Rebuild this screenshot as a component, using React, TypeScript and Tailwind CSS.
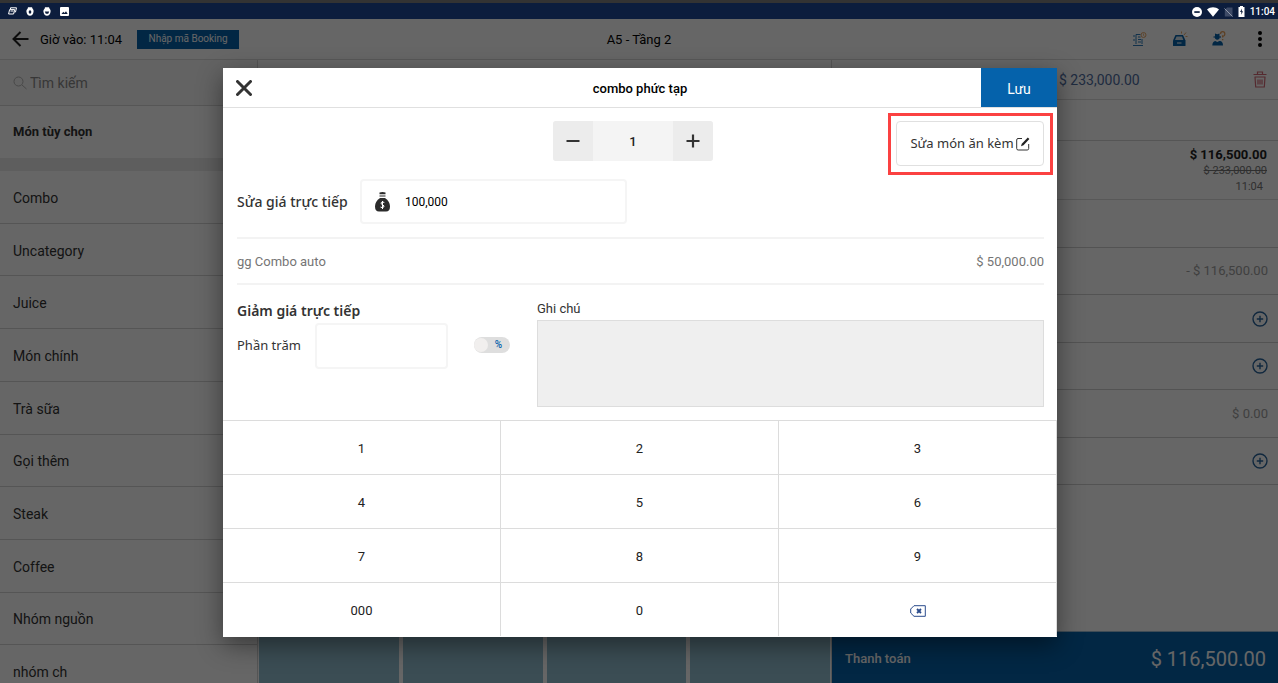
import { useState } from 'react';

const categories = [
  'Combo',
  'Uncategory',
  'Juice',
  'Món chính',
  'Trà sữa',
  'Gọi thêm',
  'Steak',
  'Coffee',
  'Nhóm nguồn',
  'nhóm ch',
];

const keys = ['1', '2', '3', '4', '5', '6', '7', '8', '9', '000', '0', 'del'];

type BillRow = { id: number; value?: string; add?: boolean };

const billRows: BillRow[] = [
  { id: 1, value: '- $ 116,500.00' },
  { id: 2, add: true },
  { id: 3, add: true },
  { id: 4, value: '$ 0.00' },
  { id: 5, add: true },
];

function StatusBar() {
  return (
    <div className="relative z-20 flex h-[19px] shrink-0 items-center justify-between border-t-[3px] border-[#333] bg-[#0c1d3d] pr-[3px] pl-2 text-white">
      <div className="flex items-center gap-[9px]">
        <svg width="9" height="8" viewBox="0 0 9 8" fill="none" stroke="currentColor">
          <path d="M2.5 2V.8h6L7.5 5H6.4M1.6 2.6h5L5.6 7H.6zM2.5 4h2.8" strokeWidth="1" />
        </svg>
        <svg width="8" height="9" viewBox="0 0 8 9">
          <path d="M2 .3h4l.6 1.5C7.5 2.6 7.8 3.7 7.5 5 7.2 7.4 6 8.7 4 8.7S.8 7.4.5 5C.2 3.7.6 2.6 1.6 1.8z" fill="currentColor" />
          <ellipse cx="4" cy="5" rx="1.3" ry="1.7" fill="#0c1d3d" />
        </svg>
        <svg width="8" height="9" viewBox="0 0 8 9">
          <path d="M2 .3h4l.6 1.5C7.5 2.6 7.8 3.7 7.5 5 7.2 7.4 6 8.7 4 8.7S.8 7.4.5 5C.2 3.7.6 2.6 1.6 1.8z" fill="currentColor" />
          <path d="M1.8 4.5h4.4L5.2 6.7H2.8z" fill="#0c1d3d" />
        </svg>
        <svg width="9" height="9" viewBox="0 0 9 9">
          <rect width="9" height="9" rx="1" fill="currentColor" />
          <path d="m1.5 7 1.8-2.3 1.2 1.4L6 4.2 7.7 7z" fill="#0c1d3d" />
        </svg>
      </div>
      <div className="flex items-center gap-[5px] pt-px">
        <svg width="10" height="10" viewBox="0 0 10 10">
          <circle cx="5" cy="5" r="5" fill="currentColor" />
          <path d="M2.3 4.2h5.4v1.7H2.3z" fill="#0c1d3d" />
        </svg>
        <svg width="12" height="10" viewBox="0 0 12 10">
          <path d="M0 2.5C3.5-.4 8.5-.4 12 2.5L6 9.7z" fill="currentColor" />
        </svg>
        <svg width="9" height="10" viewBox="0 0 9 10">
          <path d="M3 .5h5.5v9H.8V3z" fill="#3d4a66" />
          <path d="m.5 1.5 8 8" stroke="#8f98aa" />
        </svg>
        <svg width="7" height="11" viewBox="0 0 7 11">
          <path d="M2 0h3v1h1.5v10h-6V1H2z" fill="currentColor" />
          <path d="M4 2.5 2 6h1.3v2.7L5 5.2H3.8z" fill="#0c1d3d" />
        </svg>
        <span className="text-[10px] leading-4 font-medium">11:04</span>
      </div>
    </div>
  );
}

function TopBar() {
  return (
    <header className="grid h-[41px] shrink-0 grid-cols-[1fr_auto_1fr] items-center border-b border-[#dcdcdc] bg-white px-3">
      <div className="flex items-center">
        <button aria-label="Quay lại" className="mr-[11px]">
          <svg width="17" height="16" viewBox="0 0 17 16" fill="none" stroke="#222" strokeWidth="2">
            <path d="M8.5 1 1.5 8l7 7M2 8h14.5" />
          </svg>
        </button>
        <span className="pt-px text-[13px] text-black">Giờ vào: 11:04</span>
        <button className="ml-[15px] h-[19px] w-[102px] bg-[#0562ab] text-[10px] leading-4 text-white">Nhập mã Booking</button>
      </div>
      <h1 className="pt-px text-[13px] text-black">A5 - Tầng 2</h1>
      <div className="flex items-center justify-end pr-1">
        <button aria-label="Ghi chú đơn" className="mr-6">
          <svg width="16" height="16" viewBox="0 0 16 16" fill="none">
            <path d="M4 13V3.5h4.5M10 8v5M1 14.5h10M6 6h2.5M6 8.5h3M6 11h3M2 4v2M2 8v2" stroke="#2d7cbc" strokeWidth="1" />
            <circle cx="11.5" cy="4" r="2.5" stroke="#e8a96a" strokeWidth="1" />
            <path d="m11.5 2.5v2l1 .8" stroke="#e8a96a" strokeWidth=".8" />
          </svg>
        </button>
        <button aria-label="Máy in" className="mr-6">
          <svg width="16" height="16" viewBox="0 0 16 16">
            <path d="M3.5 4h7.5l2.5 5.5v5q0 .5-.5.5H1.5q-.5 0-.5-.5v-5z" fill="#0562ab" />
            <path d="M4.5 5.5h5.5L11.3 9H3z" fill="#d5e3ee" />
            <path d="M5 12h4.5" stroke="#fff" />
            <path d="M9.5 2.5V.5M12 4l2-2.5M13.5 5.5h2" stroke="#e8a96a" />
          </svg>
        </button>
        <button aria-label="Khách hàng" className="mr-8">
          <svg width="14" height="16" viewBox="0 0 14 16">
            <path d="M3 2.5 5.2 3.3 7.5 2.5V7.5q-2.2 2.5-4.5 0zM.3 14.5q0-4 3-4.5l2 1 2-1h1q2.7.5 2.7 4.5z" fill="#0562ab" />
            <path d="M1.5 6h7.5" stroke="#0562ab" strokeWidth="1.2" />
            <path d="M8.5 3q0-2.3 2.2-2.3T12.8 3t-2.1 2v1.5M10.7 8v1.3" fill="none" stroke="#e8a05a" strokeWidth="1.3" />
          </svg>
        </button>
        <button aria-label="Thêm tùy chọn">
          <svg width="4" height="18" viewBox="0 0 4 18" fill="#000">
            <circle cx="2" cy="3" r="2" />
            <circle cx="2" cy="9" r="2" />
            <circle cx="2" cy="15" r="2" />
          </svg>
        </button>
      </div>
    </header>
  );
}

function CategoryList() {
  return (
    <aside className="flex w-[258px] shrink-0 flex-col border-r border-[#d5d5d5] text-sm text-[#333]">
      <label className="flex h-[46px] shrink-0 items-center gap-[3px] border-b border-[#d8d8d8] bg-[#f7f7f7] pl-[13px]">
        <svg width="14" height="14" viewBox="0 0 14 14" fill="none" stroke="#b5b5b5">
          <circle cx="5.5" cy="5.5" r="4.5" />
          <path d="m9 9 4.5 4" />
        </svg>
        <input aria-label="Tìm kiếm" placeholder="Tìm kiếm" className="w-40 bg-transparent outline-none placeholder:text-[#8a8a8a]" />
      </label>
      <a href="#mon-tuy-chon" className="flex h-[52px] shrink-0 items-center pt-px pl-[13px] text-[13px] font-bold">
        Món tùy chọn
      </a>
      <div className="h-[13px] shrink-0 bg-[#ebebeb]" />
      <nav className="grid h-[527px] shrink-0 auto-rows-fr">
        {categories.map((name) => (
          <a key={name} href="#category" className="flex items-center border-b border-[#d5d5d5] pt-0.5 pl-[13px]">
            {name}
          </a>
        ))}
      </nav>
    </aside>
  );
}

function ProductGrid() {
  return (
    <main className="flex min-w-0 flex-1 flex-col justify-end">
      <div className="grid h-[140px] grid-cols-4 gap-1 px-px">
        {[0, 1, 2, 3].map((i) => (
          <div key={i} className="bg-[#94c0d2]" />
        ))}
      </div>
    </main>
  );
}

function PlusIcon() {
  return (
    <svg width="16" height="16" viewBox="0 0 16 16" fill="none" stroke="#2a659c">
      <circle cx="8" cy="8" r="7" strokeWidth="1.4" />
      <path d="M8 4.8v6.4M4.8 8h6.4" strokeWidth="1.4" />
    </svg>
  );
}

function Bill() {
  return (
    <section className="flex w-[447px] shrink-0 flex-col border-l border-[#d5d5d5]">
      <div className="flex h-10 shrink-0 items-center justify-between border-b border-[#dcdcdc] pr-[11px] pl-[227px]">
        <span className="pt-px text-sm text-[#4e6d9f]">$ 233,000.00</span>
        <button aria-label="Xóa đơn">
          <svg width="14" height="17" viewBox="0 0 14 17" fill="none" stroke="#d46a76">
            <path d="M.5 3.5h13M4.5 3V1h5v2M1.5 6h11M2 6l.7 10h8.6L12 6M5 8.5v5M7 8.5v5M9 8.5v5" strokeWidth="1.2" />
          </svg>
        </button>
      </div>
      <div className="h-[41px] shrink-0 border-b border-[#d5d5d5]" />
      <div className="flex h-[59px] shrink-0 flex-col items-end justify-center border-b border-[#dcdcdc] pt-0.5 pr-[11px] text-[11px] leading-4 text-[#777]">
        <strong className="text-[13px] leading-4 font-bold text-[#222]">$ 116,500.00</strong>
        <s>$ 233,000.00</s>
        <span className="pr-1">11:04</span>
      </div>
      <div className="h-12 shrink-0 border-b border-[#d0d0d0]" />
      <div className="grid h-[237px] shrink-0 auto-rows-fr">
        {billRows.map((row) => (
          <div key={row.id} className="flex items-center justify-end border-b border-[#d0d0d0] pr-2.5 text-[13px] text-[#a0a0a0]">
            {row.value}
            {row.add && (
              <button aria-label="Thêm">
                <PlusIcon />
              </button>
            )}
          </div>
        ))}
      </div>
      <button className="mt-auto flex h-[52px] shrink-0 items-center justify-between border-t border-[#9dbdd8] bg-[#0562ab] pt-0.5 pr-3 pl-[13px] text-white">
        <span className="text-[13px] font-medium">Thanh toán</span>
        <span className="text-xl">$ 116,500.00</span>
      </button>
    </section>
  );
}

function ComboDialog() {
  const [qty, setQty] = useState(1);
  const [price, setPrice] = useState('100,000');
  const [percent, setPercent] = useState('');

  function press(key: string) {
    setPercent((p) => (key === 'del' ? p.slice(0, -1) : p + key));
  }

  return (
    <div role="dialog" aria-label="combo phức tạp" className="w-[834px] bg-white text-[#333] shadow-[0_8px_24px_rgba(0,0,0,0.45)]">
      <div className="grid h-10 grid-cols-[76px_1fr_76px] items-stretch border-b border-[#e0e0e0]">
        <button aria-label="Đóng" className="flex items-center pl-[13px]">
          <svg width="16" height="16" viewBox="0 0 16 16" stroke="#333" strokeWidth="3" strokeLinecap="round">
            <path d="m1.5 1.5 13 13M14.5 1.5l-13 13" />
          </svg>
        </button>
        <h2 className="self-center pt-0.5 text-center text-[13px] font-medium text-black">combo phức tạp</h2>
        <button className="bg-[#0562ab] pt-0.5 text-sm text-white">Lưu</button>
      </div>

      <div className="h-[312px] pt-[13px] pr-[13px] pl-3.5">
        <div className="grid h-[45px] grid-cols-[316px_160px_1fr] items-start">
          <div />
          <div className="grid h-10 grid-cols-[40px_1fr_40px] overflow-hidden rounded-[3px] bg-[#f4f4f4] text-[#222]">
            <button aria-label="Giảm" className="flex items-center justify-center bg-[#ececec]" onClick={() => setQty(Math.max(1, qty - 1))}>
              <svg width="14" height="14" viewBox="0 0 14 14" stroke="#333" strokeWidth="2.2">
                <path d="M.5 7h13" />
              </svg>
            </button>
            <span className="self-center pt-px text-center text-[13px] font-medium">{qty}</span>
            <button aria-label="Tăng" className="flex items-center justify-center bg-[#ececec]" onClick={() => setQty(qty + 1)}>
              <svg width="14" height="14" viewBox="0 0 14 14" stroke="#333" strokeWidth="2.2">
                <path d="M.5 7h13M7 .5v13" />
              </svg>
            </button>
          </div>
          <div className="relative justify-self-end">
            <button className="flex h-[45px] w-[148px] items-center justify-center gap-0.5 rounded-[4px] border border-[#e0e0e0] font-['Noto_Sans',sans-serif] text-[13px]">
              Sửa món ăn kèm
              <svg width="14" height="14" viewBox="0 0 14 14" fill="none" stroke="#333">
                <path d="M6 1.5H2Q.7 1.5.7 3v8.5q0 1.5 1.5 1.5h9q1.5 0 1.5-1.5V7" />
                <path d="m5 9.2.8-2.4L11.8.6l1.6 1.5L7.5 8.2z" fill="#222" stroke="none" />
              </svg>
            </button>
            <div className="pointer-events-none absolute -top-2 -right-[9px] -bottom-[9px] -left-2 border-[3px] border-[#fb4141]" />
          </div>
        </div>

        <div className="mt-[13px] flex h-[45px] items-center">
          <label htmlFor="price" className="w-[123px] font-['Noto_Sans',sans-serif] text-sm font-medium">
            Sửa giá trực tiếp
          </label>
          <div className="flex h-full w-[267px] items-center gap-[15px] rounded-[4px] border-2 border-[#f5f5f5] pl-[13px]">
            <svg width="15" height="20" viewBox="0 0 15 20">
              <path d="M4.5.5q3-1 6 0v1.8h-6zM4.5 3.5h6v1h-6z" fill="#2b2b2b" />
              <path d="M5 6h5q5 3.5 5 8.5 0 5-4 5H4q-4 0-4-5Q0 9.500 5 6z" fill="#2b2b2b" />
              <path d="M9.3 10.5q-1.800-1-3 0t1.200 2.200 1.200 2.400-3.200 0M7.500 9v8" fill="none" stroke="#fff" strokeWidth="1" />
            </svg>
            <input id="price" value={price} onChange={(e) => setPrice(e.target.value)} className="w-44 bg-transparent pt-px text-xs text-black outline-none" />
          </div>
        </div>

        <div className="mt-[13px] flex h-12 items-center justify-between border-y-2 border-[#f3f3f3] pt-px text-[13px] text-[#757575]">
          <span>gg Combo auto</span>
          <span>$ 50,000.00</span>
        </div>

        <div className="mt-3 grid grid-cols-[300px_1fr]">
          <div>
            <h3 className="mt-0.5 h-6 font-['Noto_Sans',sans-serif] text-sm leading-6 font-semibold">Giảm giá trực tiếp</h3>
            <div className="flex h-[46px] items-center">
              <label htmlFor="percent" className="w-[78px] font-['Noto_Sans',sans-serif] text-[13px]">
                Phần trăm
              </label>
              <input
                id="percent"
                value={percent}
                onChange={(e) => setPercent(e.target.value)}
                className="h-full w-[133px] rounded-[4px] border-2 border-[#f5f5f5] px-2 text-[13px] outline-none"
              />
              <label className="relative mb-0.5 ml-[26px] flex h-4 w-9 items-center rounded-full bg-[#dedede]">
                <input type="checkbox" aria-label="Phần trăm hoặc tiền" className="h-3.5 w-3.5 appearance-none rounded-full bg-[#f1efee]" />
                <span className="absolute right-2 text-[10px] leading-4 font-medium text-[#0562ab]">%</span>
              </label>
            </div>
          </div>
          <div className="flex flex-col">
            <label htmlFor="note" className="text-[13px] leading-[23px]">
              Ghi chú
            </label>
            <textarea id="note" className="block h-[87px] w-full resize-none border border-[#ddd] bg-[#efefef] p-2 text-[13px] outline-none" />
          </div>
        </div>
      </div>

      <div className="grid auto-rows-[54px] grid-cols-3 pb-px text-[13px] text-[#222]">
        {keys.map((key) => (
          <button
            key={key}
            aria-label={key === 'del' ? 'Xóa' : undefined}
            onClick={() => press(key)}
            className="flex items-center justify-center border-t border-r border-[#dcdcdc] pt-0.5"
          >
            {key === 'del' ? (
              <svg width="16" height="12" viewBox="0 0 16 12" fill="none" stroke="#2b4c8c">
                <path d="M4 .7h11.3v10.6H4L.7 8V4z" />
                <path d="m7 4 4 4M11 4 7 8" strokeWidth="1.8" />
              </svg>
            ) : (
              key
            )}
          </button>
        ))}
      </div>
    </div>
  );
}

export default function App() {
  return (
    <div className="relative flex h-screen flex-col overflow-hidden bg-white font-[Roboto,sans-serif]">
      <StatusBar />
      <TopBar />
      <div className="flex min-h-0 flex-1 overflow-hidden">
        <CategoryList />
        <ProductGrid />
        <Bill />
      </div>
      <div className="absolute inset-0 z-10 flex items-start justify-center bg-black/60 pt-[68px] pl-0.5">
        <ComboDialog />
      </div>
    </div>
  );
}
